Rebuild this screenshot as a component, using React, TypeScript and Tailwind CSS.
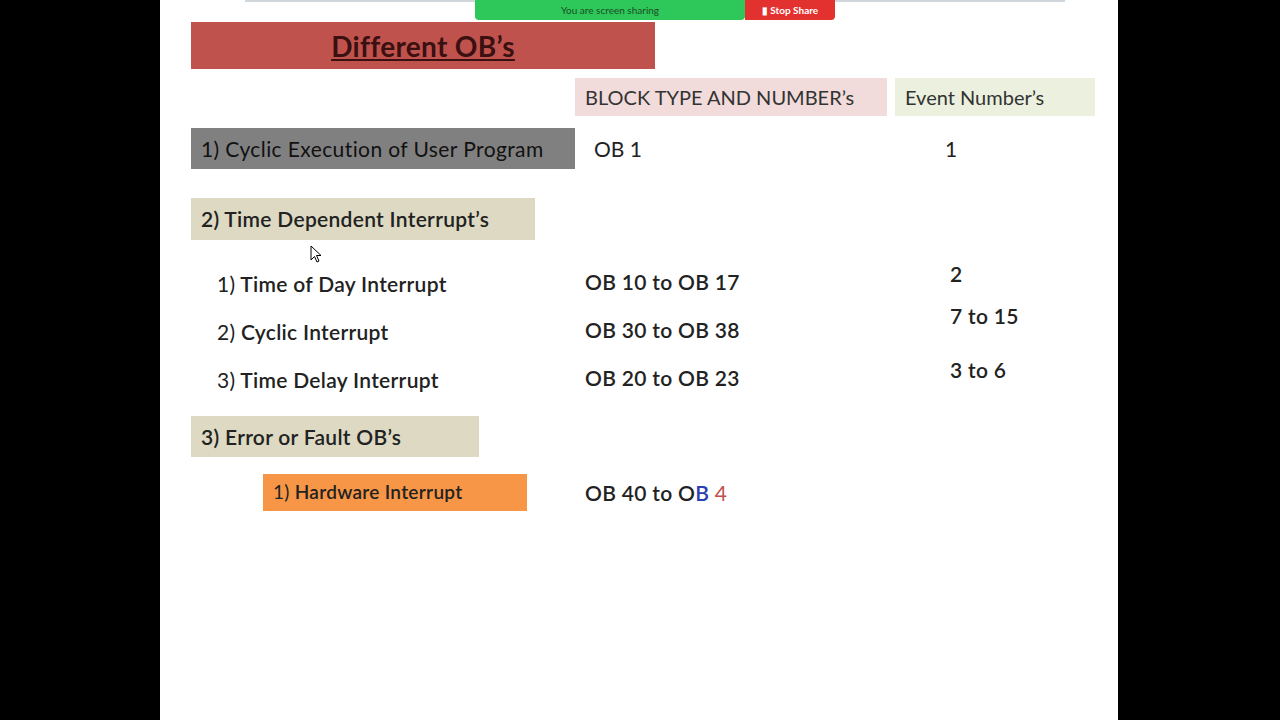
export default function App() {
  const f = { fontFamily: "Lato, 'Open Sans', sans-serif" };
  return (
    <div className="w-[1280px] h-[720px] bg-black flex" style={f}>
      <div className="relative w-[958px] h-[720px] ml-[160px] bg-white flex flex-col text-[#222]">
        <div className="flex h-[21px]">
          <div className="ml-[85px] w-[230px] h-[2px] bg-gray-300" />
          <div className="w-[270px] h-[20px] bg-[#2ec75a] rounded-b-sm flex items-center justify-center text-[10px] text-[#1b4d25]">You are screen sharing</div>
          <div className="w-[90px] h-[20px] bg-[#e2312f] rounded-br-sm flex items-center justify-center text-[10px] text-white font-bold">▮ Stop Share</div>
          <div className="w-[230px] h-[2px] bg-gray-300" />
        </div>
        <div className="ml-[31px] mt-[1px] w-[464px] h-[47px] bg-[#c0524e] flex items-center justify-center">
          <span className="text-[28px] font-bold underline text-[#3a1010] tracking-[0.3px]">Different OB’s</span>
        </div>
        <div className="flex mt-[9px] h-[38px] text-[20px] text-[#333]">
          <div className="ml-[415px] w-[312px] bg-[#f2dcdb] flex items-center pl-[10px]">BLOCK TYPE AND NUMBER’s</div>
          <div className="ml-[8px] w-[200px] bg-[#ebf1de] flex items-center pl-[10px]">Event Number’s</div>
        </div>
        <div className="flex mt-[12px] h-[41px] text-[21px] items-center">
          <div className="ml-[31px] w-[384px] h-full bg-[#808080] flex items-center pl-[10px] text-[#111] tracking-[0.4px]">1) Cyclic Execution of User Program</div>
          <div className="w-[370px] pl-[19px]">OB 1</div>
          <div>1</div>
        </div>
        <div className="ml-[31px] mt-[29px] w-[344px] h-[42px] bg-[#ddd9c3] flex items-center pl-[10px] text-[21px] font-semibold tracking-[0.3px]">2) Time Dependent Interrupt’s</div>
        <div className="flex mt-[18px] text-[21px] font-semibold tracking-[0.3px]">
          <div className="w-[425px] pl-[57px] flex flex-col gap-[22px] pt-[10px]">
            <div className="h-[26px]"><span className="font-normal">1)</span> Time of Day Interrupt</div>
            <div className="h-[26px]"><span className="font-normal">2)</span> Cyclic Interrupt</div>
            <div className="h-[26px]"><span className="font-normal">3)</span> Time Delay Interrupt</div>
          </div>
          <div className="w-[365px] flex flex-col gap-[22px] pt-[8px]">
            <div className="h-[26px]">OB 10 to OB 17</div>
            <div className="h-[26px]">OB 30 to OB 38</div>
            <div className="h-[26px]">OB 20 to OB 23</div>
          </div>
          <div className="flex flex-col">
            <div className="h-[42px]">2</div>
            <div className="h-[54px]">7 to 15</div>
            <div>3 to 6</div>
          </div>
        </div>
        <div className="ml-[31px] mt-[26px] w-[288px] h-[41px] bg-[#ddd9c3] flex items-center pl-[10px] text-[21px] font-semibold tracking-[0.3px]">3) Error or Fault OB’s</div>
        <div className="flex mt-[17px] items-center text-[21px] font-semibold tracking-[0.3px]">
          <div className="ml-[103px] w-[264px] h-[37px] bg-[#f79646] flex items-center pl-[10px] text-[19px]"><span className="font-normal">1)</span>&nbsp;Hardware Interrupt</div>
          <div className="ml-[58px]">OB 40 to O<span className="text-[#2a3fb0]">B</span> <span className="text-[#c0504d] font-normal">4</span></div>
        </div>
        <svg className="absolute left-[150px] top-[245px]" width="12" height="19" viewBox="0 0 12 19">
          <path d="M1 1 L1 15 L4.5 11.5 L7 17 L9 16 L6.5 10.5 L11 10.5 Z" fill="white" stroke="black" strokeWidth="1" />
        </svg>
      </div>
    </div>
  );
}
